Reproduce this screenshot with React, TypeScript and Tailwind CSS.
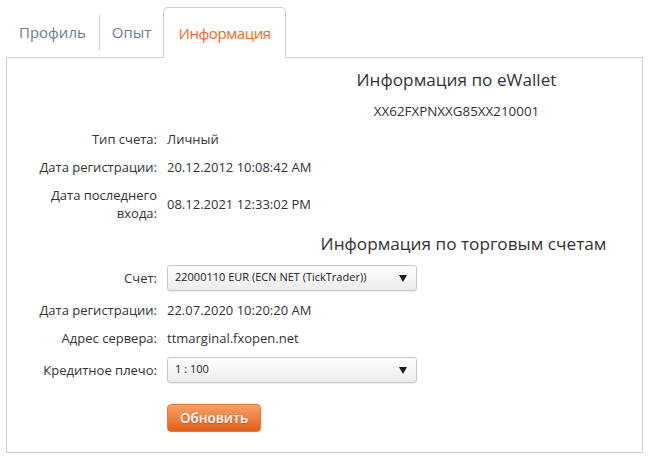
import { ReactNode } from "react";

const font = { fontFamily: '"Open Sans", "Liberation Sans", sans-serif' };

function Row({ label, children }: { label: ReactNode; children: ReactNode }) {
  return (
    <div className="flex items-center gap-[10px] leading-[18px]">
      <div className="w-[120px] shrink-0 text-right">{label}</div>
      <div className="flex-1">{children}</div>
    </div>
  );
}

function Select({ value }: { value: string }) {
  return (
    <div className="flex h-[26px] w-[250px] items-center justify-between rounded-[3px] border border-[#c8c8c8] bg-gradient-to-b from-white to-[#ececec] pl-[7px] pr-[9px] shadow-[0_1px_1px_rgba(0,0,0,0.06)]">
      <span className="-mt-[3px] text-[11px] text-[#222]">{value}</span>
      <svg width="8" height="7" viewBox="0 0 8 7">
        <path d="M0 0 H8 L4 7 Z" fill="#1a1a1a" />
      </svg>
    </div>
  );
}

export default function App() {
  return (
    <div className="h-[470px] w-[650px] bg-white text-[13px] text-[#333]" style={font}>
      {/* tabs */}
      <div className="relative z-10 -mb-px flex h-[58px] items-stretch pl-[6px] pt-[7px] text-[15px]">
        <div className="flex items-center px-[13px] text-[#6f7d8c]">Профиль</div>
        <div className="w-px self-center h-[35px] bg-[#d0d0d0]" />
        <div className="flex items-center px-[12px] text-[#6f7d8c]">Опыт</div>
        <div className="flex items-center rounded-t-[5px] border border-b-0 border-[#cfcfcf] bg-white px-[14px] tracking-[-0.4px] text-[#f26a21]">
          Информация
        </div>
      </div>

      {/* panel */}
      <div className="ml-[6px] h-[396px] w-[637px] border border-[#cfcfcf] pt-[10px]">
        <div className="ml-[264px] text-center">
          <h2 className="text-[17.2px] leading-[24px] text-[#333]">Информация по eWallet</h2>
          <p className="mt-[11px] text-[13.4px] leading-[16px]">XX62FXPNXXG85XX210001</p>
        </div>

        <div className="ml-[30px] mt-[11px] flex flex-col gap-[10px]">
          <Row label="Тип счета:">Личный</Row>
          <Row label="Дата регистрации:">20.12.2012 10:08:42 AM</Row>
          <Row label="Дата последнего входа:">08.12.2021 12:33:02 PM</Row>
        </div>

        <div className="ml-[278px] mt-[10px] text-center">
          <h2 className="text-[17.2px] leading-[24px] text-[#333]">Информация по торговым счетам</h2>
        </div>

        <div className="ml-[30px] mt-[9px] flex flex-col gap-[10px]">
          <Row label="Счет:">
            <Select value="22000110 EUR (ECN NET (TickTrader))" />
          </Row>
          <Row label="Дата регистрации:">22.07.2020 10:20:20 AM</Row>
          <Row label="Адрес сервера:">ttmarginal.fxopen.net</Row>
          <Row label="Кредитное плечо:">
            <Select value="1 : 100" />
          </Row>
          <Row label="">
            <button className="mt-[11px] flex h-[28px] w-[94px] items-center justify-center rounded-[4px] border border-[#e0793a] bg-gradient-to-b from-[#f8a064] to-[#e35f10] text-[13.5px] font-semibold text-white [text-shadow:0_1px_1px_rgba(120,40,0,0.35)]">
              Обновить
            </button>
          </Row>
        </div>
      </div>
    </div>
  );
}
